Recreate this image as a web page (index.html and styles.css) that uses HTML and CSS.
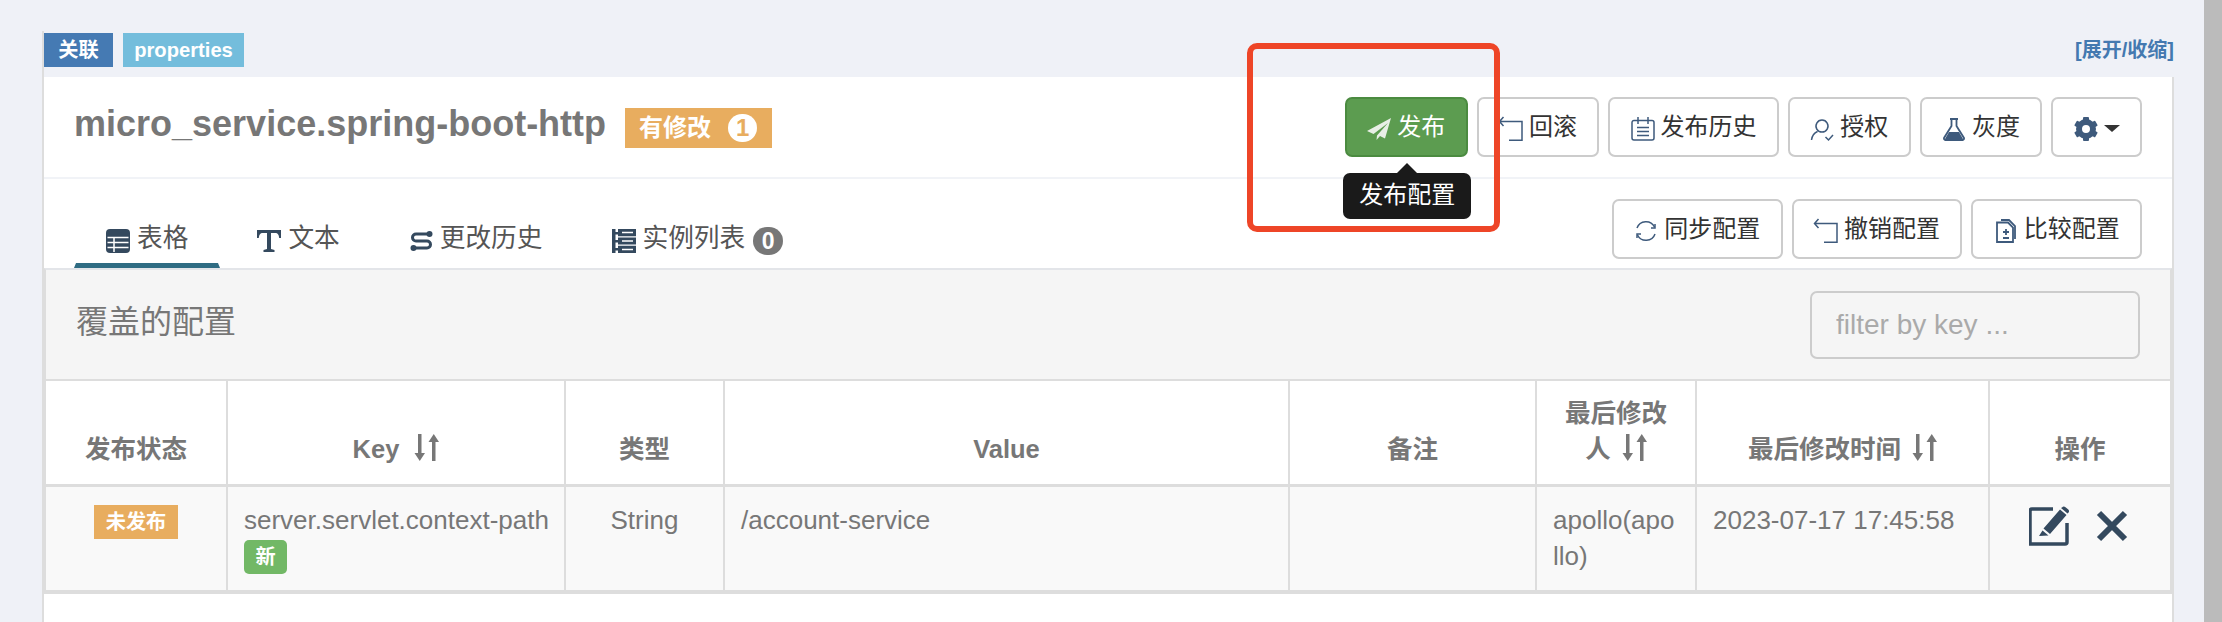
FILE: index.html
```html
<!DOCTYPE html>
<html lang="zh">
<head>
<meta charset="utf-8">
<title>Apollo</title>
<link rel="stylesheet" href="styles.css">
</head>
<body>
<div class="page">
  <div class="main">
    <div class="toprow">
      <div class="tags">
        <span class="tag tag-blue">关联</span>
        <span class="tag tag-info">properties</span>
      </div>
      <a class="toggle">[展开/收缩]</a>
    </div>
    <div class="panel">
      <div class="head">
        <div class="title-wrap">
          <span class="title">micro_service.spring-boot-http</span>
          <span class="modified">有修改<span class="count">1</span></span>
        </div>
        <div class="btns">
          <button class="btn btn-green">
            <svg class="ico" viewBox="0 0 24 24"><path d="M24 1 0 14l6.500 3L21 6 10 18.500 9.500 23l3.500-4 5 2.500z" fill="#e8efe6"/></svg>发布
            <span class="tip">发布配置</span>
          </button>
          <button class="btn"><svg class="ico" viewBox="0 0 24 24"><path d="M4.500 0 .500 4.500 4.500 9M.500 4.500H23V23.300H10" class="ln"/></svg>回滚</button>
          <button class="btn"><svg class="ico" viewBox="0 0 24 24"><path d="M1 5.500a2 2 0 0 1 2-2h18a2 2 0 0 1 2 2V21a2 2 0 0 1-2 2H3a2 2 0 0 1-2-2zM7 0v7M17 0v7M6 10.500h12M6 14.500h12M6 18.500h12" class="ln"/></svg>发布历史</button>
          <button class="btn"><svg class="ico" viewBox="0 0 24 24"><path d="M12 3a6 6 0 1 1-.01 0zM7.500 14.500C4 16 2 19 1.500 23M15.500 20l3 3 4.500-5" class="ln"/></svg>授权</button>
          <button class="btn"><svg class="ico" viewBox="0 0 24 24"><path d="M8 2h8M9.500 2v7L2 21a1.500 1.500 0 0 0 1.300 2h17.400a1.500 1.500 0 0 0 1.300-2L14.500 9V2" class="ln ln-thick"/><path d="M7 15h10l4 7H3z" class="fl"/></svg>灰度</button>
          <button class="btn"><svg class="ico" viewBox="0 0 24 24"><g class="fl"><rect x="9" y="0" width="6" height="24" rx="1"/><rect x="9" y="0" width="6" height="24" rx="1" transform="rotate(60 12 12)"/><rect x="9" y="0" width="6" height="24" rx="1" transform="rotate(120 12 12)"/></g><circle cx="12" cy="12" r="7" class="gear-ring"/></svg><span class="caret"></span></button>
        </div>
      </div>
      <div class="tabbar">
        <ul class="tabs">
          <li class="tab active"><svg class="ico" viewBox="0 0 24 24"><rect y="0" width="24" height="24" rx="4" class="fl"/><path d="M1.500 8.500h21M1.500 13.500h21M1.500 18.500h21M8 8.500V23" class="wl"/></svg>表格</li>
          <li class="tab"><svg class="ico" viewBox="0 0 24 24"><path d="M0 1h24v8h-1.800c-.3-3-1.200-5-4.200-5h-4v16l3.500 1v2H6.500v-2l3.500-1V4H6c-3 0-3.900 2-4.200 5H0z" class="fl"/></svg>文本</li>
          <li class="tab"><svg class="ico" viewBox="0 0 24 24"><path d="M20 5H7a3.500 3.500 0 0 0 0 7h11a3.500 3.500 0 0 1 0 7H5" class="st"/><circle cx="20.500" cy="5" r="3" class="fl"/><circle cx="4.500" cy="19" r="3" class="fl"/></svg>更改历史</li>
          <li class="tab"><svg class="ico" viewBox="0 0 24 24"><path d="M0 0h3.500v3H8v2.500H3.500V11H8v2.500H3.500V19H8v2.500H3.500V24H0zM6 0h18v7.200H6zM6 8.400h18v7.200H6zM6 16.800h18V24H6z" class="fl"/><path d="M10 3.600h11M10 12h11M10 20.400h11" class="wl"/></svg>实例列表<span class="zero">0</span></li>
        </ul>
        <div class="btns">
          <button class="btn"><svg class="ico" viewBox="0 0 24 24"><path d="M3 9A9.500 9.500 0 0 1 20.500 8M21 15A9.500 9.500 0 0 1 3.500 16" class="ln"/><path d="M21 5V9h-4M3 19V15h4" class="ln"/></svg>同步配置</button>
          <button class="btn"><svg class="ico" viewBox="0 0 24 24"><path d="M4.500 0 .500 4.500 4.500 9M.500 4.500H23V23.300H10" class="ln"/></svg>撤销配置</button>
          <button class="btn"><svg class="ico" viewBox="0 0 24 24"><path d="M3 3.500h11l5 5V23H3zM12 10v6M9 13h6M9 19h6M7 1h8l6 6v13" class="ln ln-thick"/></svg>比较配置</button>
        </div>
      </div>
      <div class="box">
        <div class="box-head">
          <span class="box-title">覆盖的配置</span>
          <input class="filter" type="text" placeholder="filter by key ...">
        </div>
        <table class="grid">
          <colgroup>
            <col class="c1"><col class="c2"><col class="c3"><col class="c4"><col class="c5"><col class="c6"><col class="c7"><col class="c8">
          </colgroup>
          <thead>
            <tr>
              <th>发布状态</th>
              <th>Key <svg class="sort sort-wide" viewBox="0 0 25 27"><path d="M4 0h3.500v19H11l-5.250 8L0.500 19H4zM18 27h3.500V8H25L19.750 0 14.500 8H18z"/></svg></th>
              <th>类型</th>
              <th>Value</th>
              <th>备注</th>
              <th>最后修改人 <svg class="sort" viewBox="0 0 25 27"><path d="M4 0h3.500v19H11l-5.250 8L0.500 19H4zM18 27h3.500V8H25L19.750 0 14.500 8H18z"/></svg></th>
              <th>最后修改时间 <svg class="sort" viewBox="0 0 25 27"><path d="M4 0h3.500v19H11l-5.250 8L0.500 19H4zM18 27h3.500V8H25L19.750 0 14.500 8H18z"/></svg></th>
              <th>操作</th>
            </tr>
          </thead>
          <tbody>
            <tr>
              <td class="center"><span class="tag tag-warn">未发布</span></td>
              <td class="key-cell">server.servlet.context-path<br><span class="tag tag-new">新</span></td>
              <td class="center">String</td>
              <td>/account-service</td>
              <td></td>
              <td class="breakall">apollo(apollo)</td>
              <td>2023-07-17 17:45:58</td>
              <td>
                <div class="actions">
                  <svg class="edit" viewBox="0 0 40 40"><path d="M24 3H3a2 2 0 0 0-2 2v33h35a2 2 0 0 0 2-2V17" class="ln2"/><path d="M31 3.500l6.500 5.500L21 28l-6.500-5.500zM33 1.500a2.500 2.500 0 0 1 3.500-.3l2.500 2.100a2.500 2.500 0 0 1 .3 3.500L38.500 7.500 32 2zM13.500 24.500l6 5L10 30z" class="fl2"/></svg>
                  <svg class="del" viewBox="0 0 32 32"><path d="M3 3l26 26M29 3 3 29" class="x"/></svg>
                </div>
              </td>
            </tr>
          </tbody>
        </table>
      </div>
    </div>
  </div>
  <div class="strip"></div>
</div>
<div class="redbox"></div>
</body>
</html>
```
FILE: styles.css
```css
* { box-sizing: border-box; }
html, body { margin: 0; padding: 0; height: 622px; overflow: hidden; }
body {
  background: #eff1f7;
  color: #777;
  font-family: "Liberation Sans", "Noto Sans CJK SC", sans-serif;
  font-size: 26px;
  line-height: 36px;
  position: relative;
}
.page { display: flex; height: 622px; }
.main {
  flex: 1;
  padding: 31px 30px 0 42px;
  display: flex;
  flex-direction: column;
}
.strip { width: 18px; background: #bbbbbb; }

.toprow {
  height: 46px;
  display: flex;
  justify-content: space-between;
  border-left: 2px solid #dddddd;
  padding-top: 2px;
}
.tags { display: flex; gap: 10px; align-items: flex-start; }
.tag {
  display: inline-block;
  height: 34px;
  line-height: 34px;
  font-size: 20.200px;
  font-weight: bold;
  color: #fff;
  text-align: center;
}
.tag-blue { background: #457ab3; width: 69px; }
.tag-info { background: #74bddc; width: 121px; }
.tag-warn { background: #e8ad5f; width: 84px; vertical-align: top; margin-top: 3px; }
.tag-new { background: #72b866; width: 43px; border-radius: 5px; vertical-align: top; margin-top: 2px; }
.toggle { color: #4479b0; font-size: 20px; font-weight: bold; line-height: 22px; margin-top: 6px; }

.panel {
  flex: 1;
  background: #fff;
  border-left: 2px solid #dddddd;
  border-right: 2px solid #dddddd;
}
.head {
  height: 102px;
  padding: 20px 30px 0 30px;
  display: flex;
  justify-content: space-between;
  align-items: flex-start;
  border-bottom: 2px solid #f1f3f7;
}
.title-wrap { display: flex; align-items: center; gap: 19px; margin-top: 11px; }
.title { font-size: 36px; font-weight: bold; color: #777; line-height: 40px; margin-top: -9px; }
.modified {
  height: 40px;
  width: 147px;
  padding-left: 14px;
  background: #e8ad5f;
  color: #fff;
  font-size: 24px;
  font-weight: bold;
  line-height: 40px;
  display: flex;
  align-items: center;
}
.count {
  width: 29px;
  height: 28px;
  margin-left: 17px;
  border-radius: 14px;
  background: #fff;
  color: #e8ad5f;
  font-size: 24px;
  line-height: 28px;
  text-align: center;
}
.btns { display: flex; gap: 9px; }
.btn {
  position: relative;
  height: 60px;
  padding: 0 20.350px 6px;
  display: flex;
  align-items: center;
  gap: 6px;
  background: #fff;
  border: 2px solid #cccccc;
  border-radius: 7px;
  color: #333;
  font-family: inherit;
  font-size: 24px;
  white-space: nowrap;
}
.btn .ico { margin-top: 10px; }
.btn-green { background: #5c9c50; border-color: #4b8b40; color: #fff; }
.ico { width: 24px; height: 24px; flex: none; overflow: visible; }
.ln { fill: none; stroke: #3e5a7c; stroke-width: 1.500; }
.ln-thick { stroke-width: 1.800; }
.fl { fill: #34495e; }
.st { fill: none; stroke: #34495e; stroke-width: 3; }
.wl { fill: none; stroke: #fff; stroke-width: 1.500; }
.gear-ring { fill: #fff; stroke: #3e5a7c; stroke-width: 6; }
.btn .fl { fill: #3e5a7c; }
.caret {
  width: 0;
  height: 0;
  margin-top: 8px;
  border-left: 8px solid transparent;
  border-right: 8px solid transparent;
  border-top: 7px solid #333;
}
.tip {
  position: absolute;
  top: 74px;
  left: 50%;
  width: 128px;
  height: 46px;
  margin-left: -63px;
  background: #1a1a1a;
  border-radius: 7px;
  color: #fff;
  font-size: 24px;
  line-height: 44px;
  text-align: center;
  z-index: 2;
}
.tip::before {
  content: "";
  position: absolute;
  left: 54px;
  top: -10px;
  border-left: 10px solid transparent;
  border-right: 10px solid transparent;
  border-bottom: 10px solid #1a1a1a;
}

.tabbar {
  height: 89px;
  padding: 20px 30px 0 30px;
  display: flex;
  justify-content: space-between;
  align-items: flex-start;
}
.tabs {
  list-style: none;
  margin: 0;
  padding: 0;
  display: flex;
  gap: 5px;
  height: 69px;
  align-items: flex-end;
}
.tab {
  height: 69px;
  padding: 23px 30px 0;
  display: flex;
  align-items: flex-start;
  gap: 7px;
  font-size: 25.700px;
  line-height: 32px;
  color: #555;
  border-left: 2px solid transparent;
  border-right: 2px solid transparent;
  border-bottom: 5px solid transparent;
}
.tab .ico { margin-top: 7px; }
.tab.active { border-bottom-color: #2f6c83; }
.zero {
  width: 30px;
  height: 28px;
  margin-left: 1px;
  margin-top: 5px;
  border-radius: 14px;
  background: #777;
  color: #fff;
  font-size: 23px;
  font-weight: bold;
  line-height: 28px;
  text-align: center;
}

.box {
  border: 2px solid #dddddd;
  border-top: 2px solid #e3e5e9;
}
.box-head {
  height: 111px;
  padding: 0 30px 0 30px;
  background: #f5f5f5;
  border-bottom: 2px solid #dddddd;
  display: flex;
  justify-content: space-between;
  align-items: center;
}
.box-title { font-size: 32px; color: #777; margin-top: -5px; }
.filter {
  width: 330px;
  height: 68px;
  padding: 0 24px;
  margin-top: 1px;
  background: #f5f5f5;
  border: 2px solid #cccccc;
  border-radius: 7px;
  font-family: inherit;
  font-size: 28px;
}
.filter::placeholder { color: #aaaaaa; opacity: 1; }

.grid { width: 100%; table-layout: fixed; border-collapse: separate; border-spacing: 0; }
.c1 { width: 182px; } .c2 { width: 338px; } .c3 { width: 159px; } .c4 { width: 565px; }
.c5 { width: 247px; } .c6 { width: 160px; } .c7 { width: 293px; } .c8 { width: 180px; }
.grid th {
  height: 106px;
  padding: 0 16px 17px;
  vertical-align: bottom;
  text-align: center;
  font-size: 25.500px;
  font-weight: bold;
  color: #777;
  background: #fff;
  border-right: 2px solid #dddddd;
  border-bottom: 3px solid #dddddd;
}
.grid td {
  height: 105px;
  padding: 15px 16px 0;
  vertical-align: top;
  background: #f9f9f9;
  border-right: 2px solid #dddddd;
  border-bottom: 2px solid #dddddd;
}
.grid th:last-child, .grid td:last-child { border-right: 0; }
.grid td.key-cell { padding-right: 10px; }
.center { text-align: center; }
.breakall { word-break: break-all; }
.grid td.breakall { padding-right: 18px; }
.sort { width: 25px; height: 27px; fill: #777; vertical-align: -3px; margin-left: 4px; }
.sort-wide { margin-left: 8px; }
.actions { display: flex; align-items: flex-start; gap: 27px; padding-left: 23px; margin-top: 4px; }
.edit { width: 40px; height: 40px; flex: none; }
.del { width: 32px; height: 32px; flex: none; margin-top: 4px; }
.ln2 { fill: none; stroke: #34495e; stroke-width: 3.500; }
.fl2 { fill: #34495e; }
.x { fill: none; stroke: #34495e; stroke-width: 6; }

.redbox {
  position: absolute;
  left: 1247px;
  top: 43px;
  width: 253px;
  height: 189px;
  border: 6px solid #ee4527;
  border-radius: 10px;
  z-index: 3;
}
```
